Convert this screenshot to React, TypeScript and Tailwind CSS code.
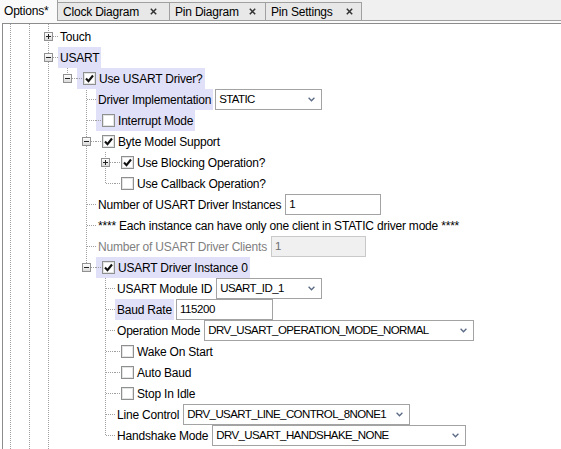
import { clsx } from "clsx";

type Field = {
  kind: "combo" | "input";
  value: string;
  w: string;
  disabled?: boolean;
};

type Row = {
  cols: string;
  exp?: "plus" | "minus";
  label: string;
  check?: boolean;
  hl?: boolean;
  dim?: boolean;
  field?: Field;
};

const rows: Row[] = [
  { cols: "||T", exp: "plus", label: "Touch" },
  { cols: "||T", exp: "minus", label: "USART", hl: true },
  { cols: "|||L", exp: "minus", label: "Use USART Driver?", check: true, hl: true },
  {
    cols: "||| T",
    label: "Driver Implementation",
    hl: true,
    field: { kind: "combo", value: "STATIC", w: "w-[107px]" },
  },
  { cols: "||| T", label: "Interrupt Mode", check: false, hl: true },
  { cols: "||| T", exp: "minus", label: "Byte Model Support", check: true },
  { cols: "||| |T", exp: "plus", label: "Use Blocking Operation?", check: true },
  { cols: "||| |L", label: "Use Callback Operation?", check: false },
  {
    cols: "||| T",
    label: "Number of USART Driver Instances",
    field: { kind: "input", value: "1", w: "w-[96px]" },
  },
  {
    cols: "||| T",
    label: "**** Each instance can have only one client in STATIC driver mode ****",
  },
  {
    cols: "||| T",
    label: "Number of USART Driver Clients",
    dim: true,
    field: { kind: "input", value: "1", w: "w-[95px]", disabled: true },
  },
  { cols: "||| L", exp: "minus", label: "USART Driver Instance 0", check: true, hl: true },
  {
    cols: "|||  T",
    label: "USART Module ID",
    field: { kind: "combo", value: "USART_ID_1", w: "w-[106px]" },
  },
  {
    cols: "|||  T",
    label: "Baud Rate",
    hl: true,
    field: { kind: "input", value: "115200", w: "w-[97px]" },
  },
  {
    cols: "|||  T",
    label: "Operation Mode",
    field: { kind: "combo", value: "DRV_USART_OPERATION_MODE_NORMAL", w: "w-[270px]" },
  },
  { cols: "|||  T", label: "Wake On Start", check: false },
  { cols: "|||  T", label: "Auto Baud", check: false },
  { cols: "|||  T", label: "Stop In Idle", check: false },
  {
    cols: "|||  T",
    label: "Line Control",
    field: { kind: "combo", value: "DRV_USART_LINE_CONTROL_8NONE1", w: "w-[227px]" },
  },
  {
    cols: "|||  L",
    label: "Handshake Mode",
    field: { kind: "combo", value: "DRV_USART_HANDSHAKE_NONE", w: "w-[254px]" },
  },
];

const tabs = [
  { label: "Clock Diagram", w: "w-[112px]", pr: "pr-[12px]" },
  { label: "Pin Diagram", w: "w-[96px]", pr: "pr-[9px]" },
  { label: "Pin Settings", w: "w-[96px]", pr: "pr-[8px]" },
];

const LINE = "#a0a0a0";

function TreeCol({
  c,
  first,
  odd,
  h = 21,
  exp,
}: {
  c: string;
  first?: boolean;
  odd?: boolean;
  h?: number;
  exp?: "plus" | "minus";
}) {
  const w = first ? 17 : 19;
  const x = first ? 7.5 : 9.5;
  const off = odd ? 1 : 0;
  return (
    <svg width={w} height={h} className="block shrink-0">
      {(c === "|" || c === "T") && (
        <line x1={x} y1={0} x2={x} y2={h} stroke={LINE} strokeDasharray="1 1" strokeDashoffset={off} />
      )}
      {c === "L" && (
        <line x1={x} y1={0} x2={x} y2={11} stroke={LINE} strokeDasharray="1 1" strokeDashoffset={off} />
      )}
      {(c === "T" || c === "L") && (
        <line x1={x + 0.5} y1={10.5} x2={w} y2={10.5} stroke={LINE} strokeDasharray="1 1" />
      )}
      {exp && (
        <g>
          <rect x={x - 4} y={6.5} width={8} height={8} fill="url(#expGrad)" stroke="#919191" />
          <line x1={x - 2.5} y1={10.5} x2={x + 2.5} y2={10.5} stroke="#222" />
          {exp === "plus" && <line x1={x} y1={8} x2={x} y2={13} stroke="#222" />}
        </g>
      )}
    </svg>
  );
}

function CheckBox({ on }: { on: boolean }) {
  return (
    <svg width={19} height={21} className="block shrink-0">
      <line x1={0} y1={10.5} x2={6} y2={10.5} stroke={LINE} strokeDasharray="1 1" />
      <rect x={6.5} y={4.5} width={12} height={12} fill="#fff" stroke="#8e8f8f" />
      <rect x={7.5} y={5.5} width={10} height={10} fill="none" stroke="#e4e4e4" />
      {on && (
        <path d="M9 10.5 L11.5 13.2 L16 7.5" fill="none" stroke="#111" strokeWidth={2.1} />
      )}
    </svg>
  );
}

function Chevron() {
  return (
    <svg width={7} height={5} className="block shrink-0">
      <polyline points="0.6,0.8 3.5,3.8 6.4,0.8" fill="none" stroke="#5b6b86" strokeWidth={1.3} />
    </svg>
  );
}

function FieldBox({ f }: { f: Field }) {
  if (f.kind === "combo") {
    return (
      <div
        className={clsx(
          "ml-[2px] flex h-[21px] shrink-0 items-center justify-between border border-[#a3a3a3] bg-white pl-[3px] pr-[6px]",
          f.w
        )}
      >
        <span className="whitespace-nowrap text-[11.5px] tracking-[-0.6px]">{f.value}</span>
        <Chevron />
      </div>
    );
  }
  return (
    <div
      className={clsx(
        "ml-[2px] flex h-[21px] shrink-0 items-center border pl-[3px] text-[11.5px] tracking-[-0.4px]",
        f.disabled
          ? "border-[#c9c9c9] bg-[#f0f0f0] text-[#6d6d6d]"
          : "border-[#a3a3a3] bg-white",
        f.w
      )}
    >
      {f.value}
    </div>
  );
}

function TreeRow({ row, idx }: { row: Row; idx: number }) {
  const chars = row.cols.split("");
  const hasCheck = row.check !== undefined;
  return (
    <div className="flex h-[21px] items-center">
      {chars.map((c, i) => (
        <TreeCol
          key={i}
          c={c}
          first={i === 0}
          odd={idx % 2 === 1}
          exp={i === chars.length - 1 ? row.exp : undefined}
        />
      ))}
      <span className={clsx("flex h-[21px] shrink-0 items-center", row.hl && "bg-[#e0e0f8]")}>
        {hasCheck && <CheckBox on={!!row.check} />}
        <span
          className={clsx(
            "whitespace-nowrap px-[2px]",
            hasCheck && "ml-[1px]",
            row.dim ? "text-[#808080]" : "text-black"
          )}
        >
          {row.label}
        </span>
      </span>
      {row.field && <FieldBox f={row.field} />}
    </div>
  );
}

function Filler({ h }: { h: number }) {
  return (
    <div className="flex" style={{ height: h }}>
      <TreeCol c="|" first h={h} />
      <TreeCol c="|" h={h} />
      <TreeCol c="|" h={h} />
    </div>
  );
}

export default function App() {
  return (
    <div className="h-[449px] w-[561px] overflow-hidden bg-white font-['Liberation_Sans',Arial,sans-serif] text-[12px] tracking-[-0.2px] text-black">
      <svg width={0} height={0} className="absolute">
        <defs>
          <linearGradient id="expGrad" x1="0" y1="0" x2="0" y2="1">
            <stop offset="0" stopColor="#ffffff" />
            <stop offset="1" stopColor="#d8d8d8" />
          </linearGradient>
        </defs>
      </svg>

      {/* Tab strip */}
      <div className="flex h-[21px] items-end bg-[#f0f0f0]">
        <div className="flex h-[21px] w-[58px] shrink-0 items-center border-r border-[#a0a0a0] bg-[#fafafa] pl-[4px]">
          Options*
        </div>
        {tabs.map((t) => (
          <div
            key={t.label}
            className={clsx(
              "flex h-[19px] shrink-0 items-center justify-between border-y border-r border-[#a0a0a0] bg-[#e8e8e8] pl-[5px]",
              t.w,
              t.pr
            )}
          >
            <span className="whitespace-nowrap">{t.label}</span>
            <svg width={7} height={7} className="block">
              <path d="M0.8 0.8 L6.2 6.2 M6.2 0.8 L0.8 6.2" stroke="#333" strokeWidth={1.5} />
            </svg>
          </div>
        ))}
        <div className="h-full flex-1 border-b border-[#a0a0a0]" />
      </div>
      <div className="h-[2px] bg-[#fafafa]" />

      {/* Options tree */}
      <div className="ml-[2px] h-full border-l border-t border-[#8c8c8c]">
        <Filler h={2} />
        {rows.map((r, i) => (
          <TreeRow key={r.label} row={r} idx={i} />
        ))}
        <Filler h={6} />
      </div>
    </div>
  );
}
